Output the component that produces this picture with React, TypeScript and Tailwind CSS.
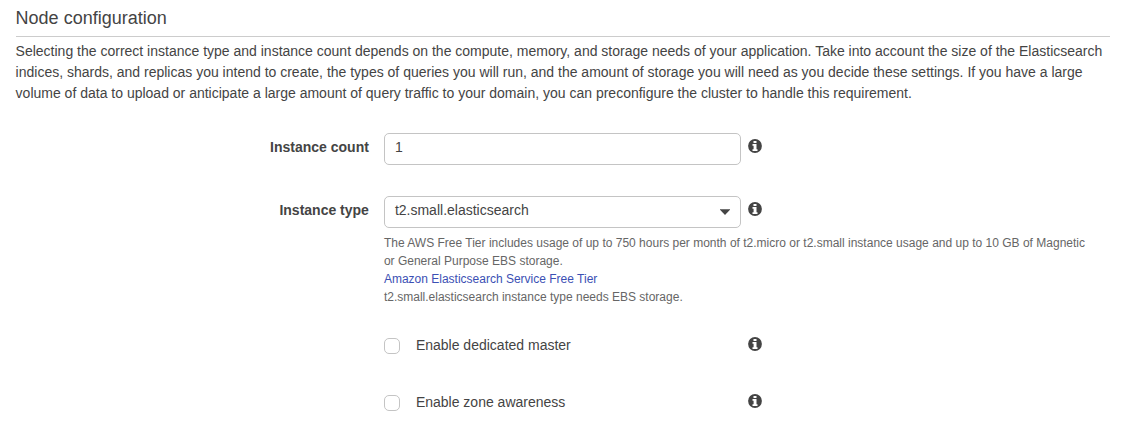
import React from "react";

function InfoIcon({ className }: { className: string }) {
  return (
    <svg viewBox="0 0 14 14" className={`h-[14px] w-[14px] shrink-0 ${className}`}>
      <circle cx="7" cy="7" r="6.9" fill="#444" />
      <path d="M5.5 2h3v2.1h-3zM4.5 5h4v5.2h1V12h-5v-1.8h1.1V6.8H4.5z" fill="#fff" />
    </svg>
  );
}

function Toggle({ label }: { label: string }) {
  return (
    <div className="flex h-[21px] items-start">
      <span className="mt-[3px] h-4 w-4 rounded-[5px] border border-[#c4c4c4] bg-white" />
      <span className="ml-4 w-[332px]">{label}</span>
      <InfoIcon className="mt-[2px]" />
    </div>
  );
}

export default function App() {
  return (
    <main className="h-[446px] overflow-hidden bg-white pl-[15.6px] font-['Liberation_Sans',Arial,sans-serif] text-[14px] leading-[21px] text-[#444]">
      <header className="h-[37px] w-[1094px] border-b border-[#ccc] pt-[5px] text-[18px] leading-[27px]">
        <h1>Node configuration</h1>
      </header>
      <p className="mt-1 whitespace-nowrap">
        Selecting the correct instance type and instance count depends on the compute, memory, and storage needs of your application. Take into account the size of the Elasticsearch<br />
        indices, shards, and replicas you intend to create, the types of queries you will run, and the amount of storage you will need as you decide these settings. If you have a large<br />
        volume of data to upload or anticipate a large amount of query traffic to your domain, you can preconfigure the cluster to handle this requirement.
      </p>
      <div className="mt-[29px] flex h-8">
        <label className="w-[353.3px] pt-1 text-right font-bold">Instance count</label>
        <div className="ml-[15px] h-8 w-[357px] rounded-[5px] border border-[#c4c4c4] pt-[3px] pl-[10px]">1</div>
        <InfoIcon className="mt-[6px] ml-[7px]" />
      </div>
      <div className="mt-[31px] flex h-8">
        <label className="w-[353.3px] pt-1 text-right font-bold">Instance type</label>
        <div className="ml-[15px] flex h-8 w-[357px] justify-between rounded-[5px] border border-[#c4c4c4] pt-[3px] pr-[10px] pl-[10px]">
          <span>t2.small.elasticsearch</span>
          <svg viewBox="0 0 10 6" className="mt-[9px] h-[6px] w-[10px] fill-[#444]"><path d="M0 .3h10v.5L5 6 0 .8z" /></svg>
        </div>
        <InfoIcon className="mt-[6px] ml-[7px]" />
      </div>
      <div className="mt-[6px] ml-[368.3px] text-[12px] leading-[18px] whitespace-nowrap text-[#666]">
        <p className="tracking-[0.004px]">The AWS Free Tier includes usage of up to 750 hours per month of t2.micro or t2.small instance usage and up to 10 GB of Magnetic<br />or General Purpose EBS storage.</p>
        <a className="block text-[#3b50b4]">Amazon Elasticsearch Service Free Tier</a>
        <p>t2.small.elasticsearch instance type needs EBS storage.</p>
      </div>
      <div className="mt-[29px] ml-[368.3px] flex flex-col gap-9">
        <Toggle label="Enable dedicated master" />
        <Toggle label="Enable zone awareness" />
      </div>
    </main>
  );
}
